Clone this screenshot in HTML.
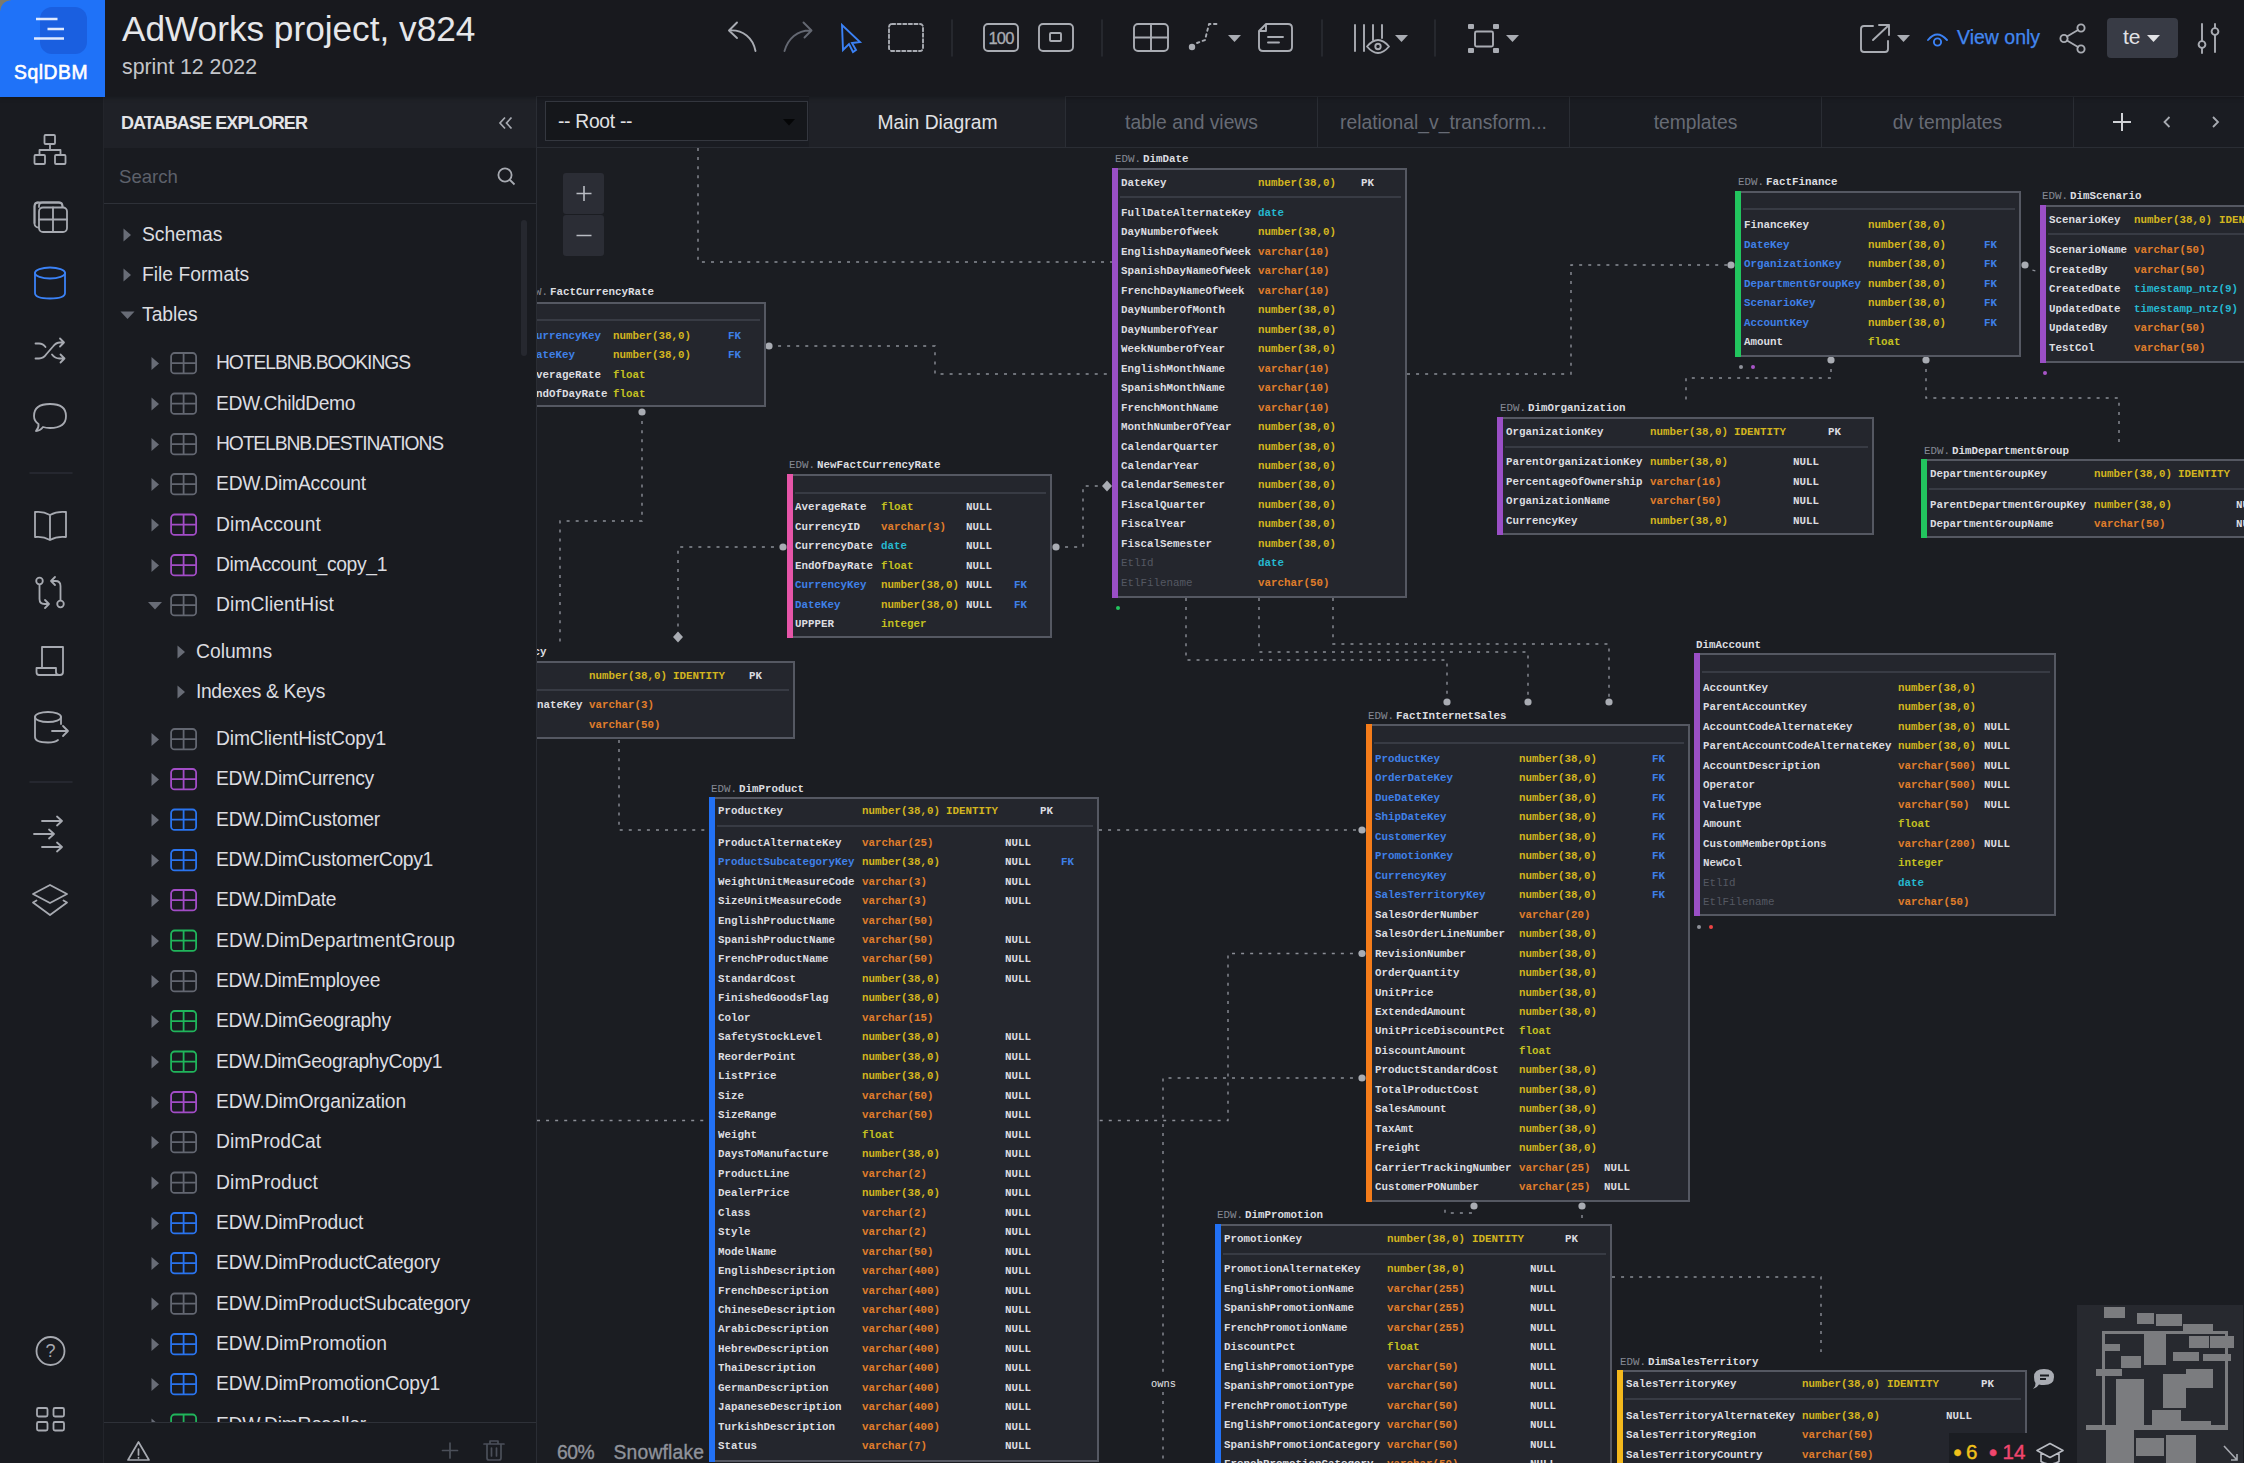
<!DOCTYPE html>
<html><head><meta charset="utf-8"><title>SqlDBM</title>
<style>
*{box-sizing:border-box;margin:0;padding:0}
html,body{width:2244px;height:1463px;overflow:hidden;background:#1a1c21;font-family:"Liberation Sans",sans-serif;color:#e1e2e5}
#top{position:absolute;left:0;top:0;width:2244px;height:96px;background:#18191e;box-shadow:0 1px 5px rgba(0,0,0,.35);z-index:2}
#logo{position:absolute;left:0;top:0;width:104.5px;height:96.5px;z-index:3;background:#1f72f8;border-radius:0 0 0 0}
#logo .nm{position:absolute;left:0;width:102px;top:62.3px;text-align:center;font-weight:400;font-size:19.3px;color:#fff;letter-spacing:.55px;-webkit-text-stroke:.6px #fff}
#ttl{position:absolute;left:122px;top:9px;font-size:35.2px;color:#e6e7ea;white-space:nowrap;line-height:40px}
#sub{position:absolute;left:122px;top:54px;font-size:21.3px;color:#c3c5ca;white-space:nowrap;line-height:26px}
#rail{position:absolute;left:0;top:96px;width:104px;height:1367px;background:#191b20;border-right:1px solid #23252b}
#exp{position:absolute;left:104px;top:96px;width:433px;height:1367px;background:#191b20;border-right:1px solid #2a2d34;overflow:hidden}
#exph{position:absolute;left:0;top:0;width:432px;height:52px;background:#1f2127}
#exph .t{position:absolute;left:17px;top:16px;font-weight:700;font-size:18px;letter-spacing:-.9px;color:#e3e4e7;line-height:22px;white-space:nowrap}
#srch{position:absolute;left:0;top:52px;width:432px;height:56px;border-bottom:1px solid #2e3138}
#srch .p{position:absolute;left:15px;top:17.5px;font-size:18.6px;color:#5d616b;line-height:22px}
#tree{position:absolute;left:0;top:52px;width:432px;height:1278px;overflow:hidden}
.tsvg{position:absolute;left:0;top:0}
.lab{position:absolute;font-size:19.3px;line-height:26px;color:#dcdde0;white-space:nowrap}
#expf{position:absolute;left:0;top:1325.5px;width:432px;height:42px;background:#191b20;border-top:1px solid #2e3138}
#scr{position:absolute;left:417px;top:124px;width:6px;height:136px;background:#26282f;border-radius:3px}
#tabs{position:absolute;left:537px;top:96px;width:1707px;height:52px;background:#1a1c22;border-bottom:1px solid #2a2d34;border-top:1px solid #2a2c34}
#root{position:absolute;left:8px;top:4px;width:263px;height:40px;background:#15171b;border:1px solid #34373f}
#root .t{position:absolute;left:12px;top:8px;letter-spacing:-.3px;font-size:19.3px;color:#e1e2e5;line-height:24px;white-space:nowrap}
.tab{position:absolute;top:-1px;height:51px;width:252px;border-left:1px solid #2a2d34;text-align:center;font-size:19.3px;line-height:53px;color:#676b75;white-space:nowrap}
.tab.a{background:#1f2127;color:#e1e2e5;border-left:none}
#cv{position:absolute;left:537px;top:148px;width:1707px;height:1315px;background:#1b1d22;overflow:hidden}
#cv i{position:absolute;font-style:normal;font-family:"Liberation Mono",monospace;font-size:10.83px;font-weight:700;line-height:14px;white-space:pre}
.tb{position:absolute;background:#24262d;border:2px solid #555862}
.tb .bar{position:absolute;left:-2px;top:-2px;bottom:-2px;width:6px}
.tb .sep{position:absolute;left:6px;right:4px;height:2px;background:#383b44}
.conn{position:absolute;left:0;top:0}
#zoom{position:absolute;left:26px;top:25px;width:41px;height:83px}
#zoom b{position:absolute;left:0;width:41px;height:41px;background:#2b2d35;border-radius:3px}
#stat{position:absolute;left:20px;top:1292.6px;font-size:19.3px;color:#90939b;line-height:24px;white-space:pre;-webkit-text-stroke:.35px #90939b}
#cnt{position:absolute;left:1412px;top:1285px;width:80px;height:30px;background:#1b1d22}
#mini{position:absolute;left:1540px;top:1157px;width:166px;height:158px;background:#27292f;overflow:hidden}
#mini b{position:absolute;background:#7b7c7f}
svg.ic{position:absolute;overflow:visible}
</style></head><body>
<div id="top">
 <div id="logo">
  <svg class="ic" style="left:0;top:0" width="104" height="96">
   <rect x="40" y="7" width="47" height="47" rx="12" fill="#1a5fe0"/>
   <g stroke="#dfeaff" stroke-width="2.5" stroke-linecap="butt"><path d="M36,19H57.500M47.500,29H64M34,38.500H64"/></g>
  </svg>
  <div class="nm">SqlDBM</div><div style="position:absolute;left:0;top:0;width:11px;height:11px;background:radial-gradient(circle at 11px 11px,rgba(0,0,0,0) 10.3px,#7a7a6e 11px)"></div>
 </div>
 <div id="ttl">AdWorks project, v824</div>
 <div id="sub">sprint 12 2022</div>
 <svg class="ic" style="left:0;top:0" width="2244" height="96" fill="none" stroke="#a9acb3" stroke-width="1.9" stroke-linecap="round" stroke-linejoin="round">
  <!-- undo -->
  <path d="M737,22.500 L729,30.500 L737,38 M729.500,30.500 C743,29.500 753,38 755.500,51"/>
  <!-- redo -->
  <g stroke="#646872"><path d="M803.500,22.500 L811.500,30.500 L804.500,37.500 M811,30.500 C797,30 788,39 784.500,51"/></g>
  <!-- cursor -->
  <path d="M842,25 L843,50 L849,44 L853,52 L856,50 L852,43 L860,42 Z" stroke="#3b82f6" stroke-linejoin="miter"/>
  <!-- dashed rect -->
  <rect x="889" y="24" width="34" height="27" rx="3" stroke-dasharray="3.2 2.4"/>
  <path d="M952,20V56" stroke="#2b2e35" stroke-width="1.5"/>
  <!-- 100 -->
  <rect x="984" y="24" width="34" height="27" rx="4"/>
  <!-- fit box -->
  <rect x="1039" y="24" width="34" height="27" rx="4"/><rect x="1050" y="33" width="11" height="8" rx="1"/>
  <path d="M1102,20V56" stroke="#2b2e35" stroke-width="1.5"/>
  <!-- table -->
  <rect x="1134" y="24" width="34" height="27" rx="4"/><path d="M1151,24V51M1134,37.5H1168"/>
  <!-- relation -->
  <path d="M1197,43 L1205,40 L1209,24 L1217,24" stroke-dasharray="2.5 3.5"/><circle cx="1192" cy="47" r="3.2" fill="#a9acb3" stroke="none"/>
  <path d="M1228,35H1241L1234.5,42Z" fill="#a9acb3" stroke="none"/>
  <!-- note -->
  <path d="M1266,24H1288Q1292,24 1292,28V47Q1292,51 1288,51H1263Q1259,51 1259,47V31Z M1259,31H1266V24"/><path d="M1268,37H1283M1268,42.500H1279"/>
  <path d="M1322,20V56" stroke="#2b2e35" stroke-width="1.5"/>
  <!-- columns + eye -->
  <path d="M1355,25V51M1364,25V51M1373,25V40M1382,25V38"/>
  <path d="M1367,46.500 Q1378,33.500 1389,46.500 Q1378,59.500 1367,46.500Z" fill="#18191e"/><circle cx="1378" cy="46.500" r="2.700"/>
  <path d="M1395,35H1408L1401.5,42Z" fill="#a9acb3" stroke="none"/>
  <path d="M1435,20V56" stroke="#2b2e35" stroke-width="1.5"/>
  <!-- fit icon -->
  <rect x="1475" y="31.500" width="18" height="15" rx="1.500"/>
  <g fill="#a9acb3" stroke="none"><rect x="1468" y="24" width="6" height="5" rx="1"/><rect x="1493" y="24" width="6" height="5" rx="1"/><rect x="1468" y="48" width="6" height="5" rx="1"/><rect x="1493" y="48" width="6" height="5" rx="1"/>
  <path d="M1506,35H1519L1512.5,42Z"/></g>
  <!-- export -->
  <path d="M1873,26H1864Q1861,26 1861,29V49Q1861,52 1864,52H1885Q1888,52 1888,49V41"/><path d="M1873,40 L1889,25 M1879,25H1889V35"/>
  <path d="M1897,35H1910L1903.5,42Z" fill="#a9acb3" stroke="none"/>
  <!-- eye (view only) -->
  <g stroke="#3b82f6"><path d="M1928,40 Q1937,29 1947,40"/><circle cx="1937.5" cy="42" r="3.6"/></g>
  <!-- share -->
  <circle cx="2081" cy="28" r="3.6"/><circle cx="2064" cy="38.5" r="3.6"/><circle cx="2081" cy="49" r="3.6"/><path d="M2067,36.5L2078,30M2067,40.5L2078,47"/>
  <!-- sliders -->
  <path d="M2202,24V41M2202,48V53M2215,24V28M2215,35V52"/><circle cx="2202" cy="44.5" r="3.4"/><circle cx="2215" cy="31.5" r="3.4"/>
 </svg>
 <div style="position:absolute;left:986px;top:27px;width:30px;text-align:center;font-size:16.5px;line-height:22px;color:#a9acb3;letter-spacing:-.9px;-webkit-text-stroke:.3px #a9acb3">100</div>
 <div style="position:absolute;left:1957px;top:25px;font-size:19.5px;line-height:24px;color:#4287f0;white-space:nowrap;-webkit-text-stroke:.25px #4287f0">View only</div>
 <div style="position:absolute;left:2107px;top:18px;width:70.500px;height:39.500px;background:#383b45;border-radius:4px"></div>
 <div style="position:absolute;left:2123px;top:24px;font-size:21px;line-height:26px;color:#e1e2e5">te</div>
 <svg class="ic" style="left:2147px;top:35px" width="14" height="8"><path d="M0,0H13L6.5,7Z" fill="#e1e2e5"/></svg>
</div>

<div id="rail">
 <svg class="ic" style="left:0;top:0" width="104" height="1367" viewBox="0 96 104 1367" fill="none" stroke="#a7aab1" stroke-width="1.8" stroke-linecap="round" stroke-linejoin="round">
  <!-- hierarchy -->
  <rect x="44.5" y="135" width="10.5" height="9" rx="1"/><path d="M50,144V150M39.5,155V150H60.5V155"/><rect x="34.5" y="155" width="10.5" height="9" rx="1"/><rect x="55" y="155" width="10.5" height="9" rx="1"/>
  <!-- tables -->
  <path d="M39,207V206Q39,202.5 42.5,202.5H59Q62.5,202.5 62.5,206V207M34.5,223V206Q34.5,202.5 38,202.5" />
  <rect x="34.5" y="202.5" width="28" height="25" rx="4"/>
  <rect x="39" y="207.5" width="28" height="24.5" rx="4" fill="#191b20"/><path d="M53,207.5V232M39,219.5H67"/>
  <!-- database (active) -->
  <g stroke="#3b82f6"><ellipse cx="50" cy="273" rx="15" ry="5.5"/><path d="M35,273V293Q35,298.5 50,298.5Q65,298.5 65,293V273"/></g>
  <!-- shuffle -->
  <path d="M35.500,358.500H39Q43.500,358.500 46.500,354L53,346.500Q56,342.500 60,342.500H64M60,338.500L64,342.500L60,346.500"/><path d="M35.500,343.500H39Q43,343.500 45.500,347M52,354.500Q55,358.500 59.500,358.500H64.500M60.500,354.500L64.500,358.500L60.500,362.500"/>
  <!-- comment -->
  <path d="M50,404Q66,404 66,416Q66,428 50,428Q46,428 43,427Q40,431 36,431Q39,428 38.5,424Q34,421 34,416Q34,404 50,404Z"/>
  <path d="M30,473H72" stroke="#2a2d34" stroke-width="1.5"/>
  <!-- book -->
  <path d="M50,515Q43,511 35,512V537Q43,536 50,540Q57,536 66,537V512Q57,511 50,515ZM50,515V540"/>
  <!-- git compare -->
  <circle cx="39.5" cy="581" r="3.3"/><circle cx="60.5" cy="604" r="3.3"/><path d="M39.5,585V599Q39.5,604 44.5,604H49M45,600L49,604L45,608"/><path d="M60.5,600V586Q60.5,581 55.5,581H51M55,577L51,581L55,585"/>
  <!-- script -->
  <path d="M42,668V647H63V672Q63,675 60,675H39Q36.5,675 36.5,672V668H56V672Q56,675 59,675"/>
  <!-- db export -->
  <ellipse cx="48" cy="717" rx="13" ry="5"/><path d="M35,717V737Q35,742.5 48,742.5Q55,742.5 58,740M61,717V724"/><path d="M52,731H68M63,726L68,731L63,736"/>
  <path d="M30,782H72" stroke="#2a2d34" stroke-width="1.5"/>
  <!-- arrows -->
  <path d="M42,821H62M57,816.5L62,821L57,825.5"/><path d="M34,834H54M49,829.5L54,834L49,838.5"/><path d="M42,847H62M57,842.5L62,847L57,851.5"/>
  <!-- layers -->
  <path d="M50,885L67,894L50,903L33,894Z"/><path d="M36.500,900.500L33,902.500L50,915L67,902.500L63.500,900.500"/>
  <!-- help -->
  <circle cx="50.5" cy="1351" r="14"/>
  <!-- grid -->
  <rect x="37" y="1408" width="10.500" height="8.500" rx="1.500"/><rect x="53.500" y="1408" width="10.500" height="8.500" rx="1.500"/><rect x="37" y="1422" width="10.500" height="8.500" rx="1.500"/><rect x="53.500" y="1422" width="10.500" height="8.500" rx="1.500"/>
 </svg>
 <div style="position:absolute;left:40px;top:1243px;width:21px;text-align:center;font-size:18px;line-height:24px;color:#a7aab1">?</div>
</div>

<div id="exp">
 <div id="exph"><div class="t">DATABASE EXPLORER</div>
  <svg class="ic" style="left:394px;top:20px" width="16" height="14" fill="none" stroke="#a7aab1" stroke-width="1.7"><path d="M7,1.5L2,7L7,12.5M13.5,1.5L8.5,7L13.5,12.5"/></svg>
 </div>
 <div id="srch"><div class="p">Search</div>
  <svg class="ic" style="left:392px;top:18px" width="22" height="22" fill="none" stroke="#a7aab1" stroke-width="1.8"><circle cx="9" cy="9" r="6.6"/><path d="M14,14L18.5,18.5"/></svg>
 </div>
 <div id="tree"><svg class="tsvg" width="432" height="1278" viewBox="104 148 432 1278"><path d="M123.5,228.5 L131,235 L123.5,241.5Z" fill="#686c76"/><path d="M123.5,268.5 L131,275 L123.5,281.5Z" fill="#686c76"/><path d="M120.5,311.5 L134.5,311.5 L127.5,319Z" fill="#686c76"/><path d="M151.5,357.1 L159,363.6 L151.5,370.1Z" fill="#686c76"/><g fill="none" stroke="#636771" stroke-width="1.8"><rect x="171.1" y="353.0" width="25" height="20.4" rx="3.5"/><path d="M183.6,353.0V373.4M171.1,363.2H196.1"/></g><path d="M151.5,397.6 L159,404.1 L151.5,410.6Z" fill="#686c76"/><g fill="none" stroke="#636771" stroke-width="1.8"><rect x="171.1" y="393.5" width="25" height="20.4" rx="3.5"/><path d="M183.6,393.5V413.9M171.1,403.7H196.1"/></g><path d="M151.5,438.1 L159,444.6 L151.5,451.1Z" fill="#686c76"/><g fill="none" stroke="#636771" stroke-width="1.8"><rect x="171.1" y="434.0" width="25" height="20.4" rx="3.5"/><path d="M183.6,434.0V454.4M171.1,444.2H196.1"/></g><path d="M151.5,478.1 L159,484.6 L151.5,491.1Z" fill="#686c76"/><g fill="none" stroke="#636771" stroke-width="1.8"><rect x="171.1" y="474.0" width="25" height="20.4" rx="3.5"/><path d="M183.6,474.0V494.4M171.1,484.2H196.1"/></g><path d="M151.5,518.6 L159,525.1 L151.5,531.6Z" fill="#686c76"/><g fill="none" stroke="#a24dc6" stroke-width="1.8"><rect x="171.1" y="514.5" width="25" height="20.4" rx="3.5"/><path d="M183.6,514.5V534.9000000000001M171.1,524.7H196.1"/></g><path d="M151.5,559.1 L159,565.6 L151.5,572.1Z" fill="#686c76"/><g fill="none" stroke="#a24dc6" stroke-width="1.8"><rect x="171.1" y="555.0" width="25" height="20.4" rx="3.5"/><path d="M183.6,555.0V575.4000000000001M171.1,565.2H196.1"/></g><path d="M148,602.1 L162,602.1 L155,609.6Z" fill="#686c76"/><g fill="none" stroke="#636771" stroke-width="1.8"><rect x="171.1" y="595.0" width="25" height="20.4" rx="3.5"/><path d="M183.6,595.0V615.4000000000001M171.1,605.2H196.1"/></g><path d="M151.5,733.1 L159,739.6 L151.5,746.1Z" fill="#686c76"/><g fill="none" stroke="#636771" stroke-width="1.8"><rect x="171.1" y="729.0" width="25" height="20.4" rx="3.5"/><path d="M183.6,729.0V749.4000000000001M171.1,739.2H196.1"/></g><path d="M151.5,773.1 L159,779.6 L151.5,786.1Z" fill="#686c76"/><g fill="none" stroke="#a24dc6" stroke-width="1.8"><rect x="171.1" y="769.0" width="25" height="20.4" rx="3.5"/><path d="M183.6,769.0V789.4000000000001M171.1,779.2H196.1"/></g><path d="M151.5,813.6 L159,820.1 L151.5,826.6Z" fill="#686c76"/><g fill="none" stroke="#2a74ee" stroke-width="1.8"><rect x="171.1" y="809.5" width="25" height="20.4" rx="3.5"/><path d="M183.6,809.5V829.9000000000001M171.1,819.7H196.1"/></g><path d="M151.5,854.1 L159,860.6 L151.5,867.1Z" fill="#686c76"/><g fill="none" stroke="#2a74ee" stroke-width="1.8"><rect x="171.1" y="850.0" width="25" height="20.4" rx="3.5"/><path d="M183.6,850.0V870.4000000000001M171.1,860.2H196.1"/></g><path d="M151.5,894.1 L159,900.6 L151.5,907.1Z" fill="#686c76"/><g fill="none" stroke="#a24dc6" stroke-width="1.8"><rect x="171.1" y="890.0" width="25" height="20.4" rx="3.5"/><path d="M183.6,890.0V910.4000000000001M171.1,900.2H196.1"/></g><path d="M151.5,934.6 L159,941.1 L151.5,947.6Z" fill="#686c76"/><g fill="none" stroke="#20b55b" stroke-width="1.8"><rect x="171.1" y="930.5" width="25" height="20.4" rx="3.5"/><path d="M183.6,930.5V950.9000000000001M171.1,940.7H196.1"/></g><path d="M151.5,975.1 L159,981.6 L151.5,988.1Z" fill="#686c76"/><g fill="none" stroke="#636771" stroke-width="1.8"><rect x="171.1" y="971.0" width="25" height="20.4" rx="3.5"/><path d="M183.6,971.0V991.4000000000001M171.1,981.2H196.1"/></g><path d="M151.5,1015.1 L159,1021.6 L151.5,1028.1Z" fill="#686c76"/><g fill="none" stroke="#20b55b" stroke-width="1.8"><rect x="171.1" y="1011.0" width="25" height="20.4" rx="3.5"/><path d="M183.6,1011.0V1031.4M171.1,1021.2H196.1"/></g><path d="M151.5,1055.6 L159,1062.1 L151.5,1068.6Z" fill="#686c76"/><g fill="none" stroke="#20b55b" stroke-width="1.8"><rect x="171.1" y="1051.5" width="25" height="20.4" rx="3.5"/><path d="M183.6,1051.5V1071.9M171.1,1061.7H196.1"/></g><path d="M151.5,1096.1 L159,1102.6 L151.5,1109.1Z" fill="#686c76"/><g fill="none" stroke="#a24dc6" stroke-width="1.8"><rect x="171.1" y="1092.0" width="25" height="20.4" rx="3.5"/><path d="M183.6,1092.0V1112.4M171.1,1102.2H196.1"/></g><path d="M151.5,1136.1 L159,1142.6 L151.5,1149.1Z" fill="#686c76"/><g fill="none" stroke="#636771" stroke-width="1.8"><rect x="171.1" y="1132.0" width="25" height="20.4" rx="3.5"/><path d="M183.6,1132.0V1152.4M171.1,1142.2H196.1"/></g><path d="M151.5,1176.6 L159,1183.1 L151.5,1189.6Z" fill="#686c76"/><g fill="none" stroke="#636771" stroke-width="1.8"><rect x="171.1" y="1172.5" width="25" height="20.4" rx="3.5"/><path d="M183.6,1172.5V1192.9M171.1,1182.7H196.1"/></g><path d="M151.5,1217.1 L159,1223.6 L151.5,1230.1Z" fill="#686c76"/><g fill="none" stroke="#2a74ee" stroke-width="1.8"><rect x="171.1" y="1213.0" width="25" height="20.4" rx="3.5"/><path d="M183.6,1213.0V1233.4M171.1,1223.2H196.1"/></g><path d="M151.5,1257.1 L159,1263.6 L151.5,1270.1Z" fill="#686c76"/><g fill="none" stroke="#2a74ee" stroke-width="1.8"><rect x="171.1" y="1253.0" width="25" height="20.4" rx="3.5"/><path d="M183.6,1253.0V1273.4M171.1,1263.2H196.1"/></g><path d="M151.5,1297.6 L159,1304.1 L151.5,1310.6Z" fill="#686c76"/><g fill="none" stroke="#636771" stroke-width="1.8"><rect x="171.1" y="1293.5" width="25" height="20.4" rx="3.5"/><path d="M183.6,1293.5V1313.9M171.1,1303.7H196.1"/></g><path d="M151.5,1338.1 L159,1344.6 L151.5,1351.1Z" fill="#686c76"/><g fill="none" stroke="#2a74ee" stroke-width="1.8"><rect x="171.1" y="1334.0" width="25" height="20.4" rx="3.5"/><path d="M183.6,1334.0V1354.4M171.1,1344.2H196.1"/></g><path d="M151.5,1378.1 L159,1384.6 L151.5,1391.1Z" fill="#686c76"/><g fill="none" stroke="#2a74ee" stroke-width="1.8"><rect x="171.1" y="1374.0" width="25" height="20.4" rx="3.5"/><path d="M183.6,1374.0V1394.4M171.1,1384.2H196.1"/></g><path d="M151.5,1418.6 L159,1425.1 L151.5,1431.6Z" fill="#686c76"/><g fill="none" stroke="#20b55b" stroke-width="1.8"><rect x="171.1" y="1414.5" width="25" height="20.4" rx="3.5"/><path d="M183.6,1414.5V1434.9M171.1,1424.7H196.1"/></g><path d="M177.5,645.5 L185,652 L177.5,658.5Z" fill="#686c76"/><path d="M177.5,685.5 L185,692 L177.5,698.5Z" fill="#686c76"/></svg><div class="lab" style="left:38px;top:74px">Schemas</div>
<div class="lab" style="left:38px;top:114px">File Formats</div>
<div class="lab" style="left:38px;top:154px">Tables</div>
<div class="lab" style="left:112px;top:202px;letter-spacing:-1.07px">HOTELBNB.BOOKINGS</div>
<div class="lab" style="left:112px;top:242.5px;letter-spacing:-0.44px">EDW.ChildDemo</div>
<div class="lab" style="left:112px;top:283px;letter-spacing:-1.11px">HOTELBNB.DESTINATIONS</div>
<div class="lab" style="left:112px;top:323px;letter-spacing:-0.23px">EDW.DimAccount</div>
<div class="lab" style="left:112px;top:363.5px;letter-spacing:0.10px">DimAccount</div>
<div class="lab" style="left:112px;top:404px;letter-spacing:-0.34px">DimAccount_copy_1</div>
<div class="lab" style="left:112px;top:444px;letter-spacing:0.09px">DimClientHist</div>
<div class="lab" style="left:112px;top:578px;letter-spacing:-0.14px">DimClientHistCopy1</div>
<div class="lab" style="left:112px;top:618px;letter-spacing:-0.25px">EDW.DimCurrency</div>
<div class="lab" style="left:112px;top:658.5px;letter-spacing:-0.21px">EDW.DimCustomer</div>
<div class="lab" style="left:112px;top:699px;letter-spacing:-0.29px">EDW.DimCustomerCopy1</div>
<div class="lab" style="left:112px;top:739px;letter-spacing:-0.39px">EDW.DimDate</div>
<div class="lab" style="left:112px;top:779.5px;letter-spacing:0.05px">EDW.DimDepartmentGroup</div>
<div class="lab" style="left:112px;top:820px;letter-spacing:-0.35px">EDW.DimEmployee</div>
<div class="lab" style="left:112px;top:860px;letter-spacing:-0.25px">EDW.DimGeography</div>
<div class="lab" style="left:112px;top:900.5px;letter-spacing:-0.41px">EDW.DimGeographyCopy1</div>
<div class="lab" style="left:112px;top:941px;letter-spacing:-0.15px">EDW.DimOrganization</div>
<div class="lab" style="left:112px;top:981px;letter-spacing:-0.00px">DimProdCat</div>
<div class="lab" style="left:112px;top:1021.5px;letter-spacing:0.13px">DimProduct</div>
<div class="lab" style="left:112px;top:1062px;letter-spacing:-0.21px">EDW.DimProduct</div>
<div class="lab" style="left:112px;top:1102px;letter-spacing:-0.19px">EDW.DimProductCategory</div>
<div class="lab" style="left:112px;top:1142.5px;letter-spacing:-0.17px">EDW.DimProductSubcategory</div>
<div class="lab" style="left:112px;top:1183px;letter-spacing:-0.03px">EDW.DimPromotion</div>
<div class="lab" style="left:112px;top:1223px;letter-spacing:-0.15px">EDW.DimPromotionCopy1</div>
<div class="lab" style="left:112px;top:1263.5px;letter-spacing:-0.29px">EDW.DimReseller</div>
<div class="lab" style="left:92px;top:491px;letter-spacing:-0.01px">Columns</div>
<div class="lab" style="left:92px;top:531px;letter-spacing:-0.36px">Indexes &amp; Keys</div></div>
 <div id="scr"></div>
 <div id="expf">
  <svg class="ic" style="left:0;top:2.5px" width="432" height="38" fill="none" stroke="#a7aab1" stroke-width="1.7" stroke-linejoin="round" stroke-linecap="round">
   <path d="M34.5,17L45,35H24Z"/><path d="M34.5,24V30M34.5,32.5V33"/>
   <g stroke="#4b4f59"><path d="M346,18V33M338.5,25.5H353.5"/><path d="M380,19H400M383,19V33Q383,35 385,35H395Q397,35 397,33V19M386,19V16H394V19M387.5,23V31M392.5,23V31"/></g>
  </svg>
 </div>
</div>

<div id="tabs">
 <div id="root"><div class="t">-- Root --</div>
  <svg class="ic" style="left:237px;top:17px" width="14" height="8"><path d="M0,0H12L6,6.5Z" fill="#050607"/></svg>
 </div>
 <div class="tab a" style="left:272px;width:257px">Main Diagram</div>
 <div class="tab" style="left:528px">table and views</div>
 <div class="tab" style="left:780px">relational_v_transform...</div>
 <div class="tab" style="left:1032px">templates</div>
 <div class="tab" style="left:1284px">dv templates</div>
 <div class="tab" style="left:1536px;width:171px"></div>
 <svg class="ic" style="left:1536px;top:-1px" width="171" height="52" fill="none" stroke="#a7aab1" stroke-width="1.8"><path d="M40,26H58M49,17V35" stroke="#d0d2d6" stroke-width="2"/><path d="M96.500,21L91.500,26L96.500,31M140,21L145,26L140,31"/></svg>
</div>

<div id="cv">
<svg class="conn" width="1707" height="1315" viewBox="537 148 1707 1315"><g fill="none" stroke="#8b8e96" stroke-width="1.4" stroke-dasharray="3 6.07"><polyline points="698,148 698,262 1112,262"/><polyline points="769,346 935,346 935,374 1112,374"/><polyline points="642,412 642,521 560,521 560,644"/><polyline points="783,547 678,547 678,637"/><polyline points="1056,547 1083,547 1083,486 1107,486"/><polyline points="1407,374 1571,374 1571,265 1731,265"/><polyline points="1831,360 1831,378 1686,378 1686,400"/><polyline points="1926,360 1926,398 2119,398 2119,442"/><polyline points="1186,598 1186,660 1447,660 1447,702"/><polyline points="1259,598 1259,652 1528,652 1528,702"/><polyline points="1333,598 1333,644 1609,644 1609,702"/><polyline points="1099,830 1362,830"/><polyline points="1362,953.5 1228,953.5 1228,1120.5 1099,1120.5"/><polyline points="1362,1078 1163,1078 1163,1372"/><polyline points="1163,1392 1163,1463"/><polyline points="619,740 619,830 709,830"/><polyline points="537,1120.5 709,1120.5"/><polyline points="1612,1277 1821,1277 1821,1352"/><polyline points="1582,1206 1582,1224"/><polyline points="1474,1206 1474,1213 1445,1213 1445,1206"/><polyline points="2025,265 2032,270 2040,272"/></g><g fill="#a9acb3"><circle cx="769" cy="346" r="3.6"/><circle cx="642" cy="412" r="3.6"/><circle cx="783" cy="547" r="3.6"/><circle cx="1056" cy="547" r="3.6"/><circle cx="1731" cy="265" r="3.6"/><circle cx="2025" cy="265" r="3.6"/><circle cx="1831" cy="360" r="3.6"/><circle cx="1926" cy="360" r="3.6"/><circle cx="1447" cy="702" r="3.6"/><circle cx="1528" cy="702" r="3.6"/><circle cx="1609" cy="702" r="3.6"/><circle cx="1362" cy="830" r="3.6"/><circle cx="1362" cy="953.5" r="3.6"/><circle cx="1362" cy="1078" r="3.6"/><circle cx="1474" cy="1206" r="3.6"/><circle cx="1582" cy="1206" r="3.6"/><path d="M673,637 L678,631.5 L683,637 L678,642.5Z"/><path d="M1102,486 L1107,480.5 L1112,486 L1107,491.5Z"/></g><circle cx="1741" cy="367" r="2" fill="#8f929a"/><circle cx="1753" cy="367" r="2" fill="#a855c8"/><circle cx="2045" cy="373" r="2" fill="#a855c8"/><circle cx="1118" cy="608" r="2" fill="#22c55e"/><circle cx="1699" cy="927" r="2" fill="#8f929a"/><circle cx="1711" cy="927" r="2" fill="#ef4444"/></svg>
<div class="tb" style="left:-22px;top:154px;width:251px;height:105px">
<b class="sep" style="top:14.5px"></b>
</div>
<i style="left:-15.0px;top:137px;color:#868a94;font-weight:400">EDW.</i>
<i style="left:13.0px;top:137px;color:#dcdde0">FactCurrencyRate</i>
<i style="left:-7.5px;top:181px;color:#3f80e8">CurrencyKey</i>
<i style="left:76.0px;top:181px;color:#d3b51f">number(38,0)</i>
<i style="left:191.0px;top:181px;color:#3f80e8">FK</i>
<i style="left:-7.5px;top:200px;color:#3f80e8">DateKey</i>
<i style="left:76.0px;top:200px;color:#d3b51f">number(38,0)</i>
<i style="left:191.0px;top:200px;color:#3f80e8">FK</i>
<i style="left:-7.5px;top:220px;color:#dcdde0">AverageRate</i>
<i style="left:76.0px;top:220px;color:#c3c021">float</i>
<i style="left:-7.5px;top:239px;color:#dcdde0">EndOfDayRate</i>
<i style="left:76.0px;top:239px;color:#c3c021">float</i>
<div class="tb" style="left:250px;top:326px;width:265px;height:164px">
<b class="bar" style="background:#e655a8"></b>
<b class="sep" style="top:15.5px"></b>
</div>
<i style="left:252.0px;top:310px;color:#868a94;font-weight:400">EDW.</i>
<i style="left:280.0px;top:310px;color:#dcdde0">NewFactCurrencyRate</i>
<i style="left:258.0px;top:352px;color:#dcdde0">AverageRate</i>
<i style="left:344.0px;top:352px;color:#c3c021">float</i>
<i style="left:429.0px;top:352px;color:#dcdde0">NULL</i>
<i style="left:258.0px;top:372px;color:#dcdde0">CurrencyID</i>
<i style="left:344.0px;top:372px;color:#e07e2b">varchar(3)</i>
<i style="left:429.0px;top:372px;color:#dcdde0">NULL</i>
<i style="left:258.0px;top:391px;color:#dcdde0">CurrencyDate</i>
<i style="left:344.0px;top:391px;color:#26b8d0">date</i>
<i style="left:429.0px;top:391px;color:#dcdde0">NULL</i>
<i style="left:258.0px;top:411px;color:#dcdde0">EndOfDayRate</i>
<i style="left:344.0px;top:411px;color:#c3c021">float</i>
<i style="left:429.0px;top:411px;color:#dcdde0">NULL</i>
<i style="left:258.0px;top:430px;color:#3f80e8">CurrencyKey</i>
<i style="left:344.0px;top:430px;color:#d3b51f">number(38,0)</i>
<i style="left:429.0px;top:430px;color:#dcdde0">NULL</i>
<i style="left:477.0px;top:430px;color:#3f80e8">FK</i>
<i style="left:258.0px;top:450px;color:#3f80e8">DateKey</i>
<i style="left:344.0px;top:450px;color:#d3b51f">number(38,0)</i>
<i style="left:429.0px;top:450px;color:#dcdde0">NULL</i>
<i style="left:477.0px;top:450px;color:#3f80e8">FK</i>
<i style="left:258.0px;top:469px;color:#dcdde0">UPPPER</i>
<i style="left:344.0px;top:469px;color:#c3c021">integer</i>
<div class="tb" style="left:-97px;top:513px;width:355px;height:78px">
<b class="sep" style="top:25.5px"></b>
</div>
<i style="left:-90.0px;top:497px;color:#868a94;font-weight:400">EDW.</i>
<i style="left:-62.0px;top:497px;color:#dcdde0">DimCurrency</i>
<i style="left:-84.5px;top:521px;color:#dcdde0">CurrencyKey</i>
<i style="left:52.0px;top:521px;color:#d3b51f">number(38,0)</i>
<i style="left:136.0px;top:521px;color:#d3b51f">IDENTITY</i>
<i style="left:212.0px;top:521px;color:#dcdde0">PK</i>
<i style="left:-84.5px;top:550px;color:#dcdde0">CurrencyAlternateKey</i>
<i style="left:52.0px;top:550px;color:#e07e2b">varchar(3)</i>
<i style="left:-84.5px;top:570px;color:#dcdde0">CurrencyName</i>
<i style="left:52.0px;top:570px;color:#e07e2b">varchar(50)</i>
<div class="tb" style="left:575px;top:20px;width:295px;height:430px">
<b class="bar" style="background:#9a4fc6"></b>
<b class="sep" style="top:25.5px"></b>
</div>
<i style="left:578.0px;top:4px;color:#868a94;font-weight:400">EDW.</i>
<i style="left:606.0px;top:4px;color:#dcdde0">DimDate</i>
<i style="left:584.0px;top:28px;color:#dcdde0">DateKey</i>
<i style="left:721.0px;top:28px;color:#d3b51f">number(38,0)</i>
<i style="left:824.0px;top:28px;color:#dcdde0">PK</i>
<i style="left:584.0px;top:58px;color:#dcdde0">FullDateAlternateKey</i>
<i style="left:721.0px;top:58px;color:#26b8d0">date</i>
<i style="left:584.0px;top:77px;color:#dcdde0">DayNumberOfWeek</i>
<i style="left:721.0px;top:77px;color:#d3b51f">number(38,0)</i>
<i style="left:584.0px;top:97px;color:#dcdde0">EnglishDayNameOfWeek</i>
<i style="left:721.0px;top:97px;color:#e07e2b">varchar(10)</i>
<i style="left:584.0px;top:116px;color:#dcdde0">SpanishDayNameOfWeek</i>
<i style="left:721.0px;top:116px;color:#e07e2b">varchar(10)</i>
<i style="left:584.0px;top:136px;color:#dcdde0">FrenchDayNameOfWeek</i>
<i style="left:721.0px;top:136px;color:#e07e2b">varchar(10)</i>
<i style="left:584.0px;top:155px;color:#dcdde0">DayNumberOfMonth</i>
<i style="left:721.0px;top:155px;color:#d3b51f">number(38,0)</i>
<i style="left:584.0px;top:175px;color:#dcdde0">DayNumberOfYear</i>
<i style="left:721.0px;top:175px;color:#d3b51f">number(38,0)</i>
<i style="left:584.0px;top:194px;color:#dcdde0">WeekNumberOfYear</i>
<i style="left:721.0px;top:194px;color:#d3b51f">number(38,0)</i>
<i style="left:584.0px;top:214px;color:#dcdde0">EnglishMonthName</i>
<i style="left:721.0px;top:214px;color:#e07e2b">varchar(10)</i>
<i style="left:584.0px;top:233px;color:#dcdde0">SpanishMonthName</i>
<i style="left:721.0px;top:233px;color:#e07e2b">varchar(10)</i>
<i style="left:584.0px;top:253px;color:#dcdde0">FrenchMonthName</i>
<i style="left:721.0px;top:253px;color:#e07e2b">varchar(10)</i>
<i style="left:584.0px;top:272px;color:#dcdde0">MonthNumberOfYear</i>
<i style="left:721.0px;top:272px;color:#d3b51f">number(38,0)</i>
<i style="left:584.0px;top:292px;color:#dcdde0">CalendarQuarter</i>
<i style="left:721.0px;top:292px;color:#d3b51f">number(38,0)</i>
<i style="left:584.0px;top:311px;color:#dcdde0">CalendarYear</i>
<i style="left:721.0px;top:311px;color:#d3b51f">number(38,0)</i>
<i style="left:584.0px;top:330px;color:#dcdde0">CalendarSemester</i>
<i style="left:721.0px;top:330px;color:#d3b51f">number(38,0)</i>
<i style="left:584.0px;top:350px;color:#dcdde0">FiscalQuarter</i>
<i style="left:721.0px;top:350px;color:#d3b51f">number(38,0)</i>
<i style="left:584.0px;top:369px;color:#dcdde0">FiscalYear</i>
<i style="left:721.0px;top:369px;color:#d3b51f">number(38,0)</i>
<i style="left:584.0px;top:389px;color:#dcdde0">FiscalSemester</i>
<i style="left:721.0px;top:389px;color:#d3b51f">number(38,0)</i>
<i style="left:584.0px;top:408px;color:#545862;font-weight:400">EtlId</i>
<i style="left:721.0px;top:408px;color:#26b8d0">date</i>
<i style="left:584.0px;top:428px;color:#545862;font-weight:400">EtlFilename</i>
<i style="left:721.0px;top:428px;color:#e07e2b">varchar(50)</i>
<div class="tb" style="left:1198px;top:43px;width:286px;height:166px">
<b class="bar" style="background:#22c55e"></b>
<b class="sep" style="top:14.5px"></b>
</div>
<i style="left:1201.0px;top:27px;color:#868a94;font-weight:400">EDW.</i>
<i style="left:1229.0px;top:27px;color:#dcdde0">FactFinance</i>
<i style="left:1207.0px;top:70px;color:#dcdde0">FinanceKey</i>
<i style="left:1331.0px;top:70px;color:#d3b51f">number(38,0)</i>
<i style="left:1207.0px;top:90px;color:#3f80e8">DateKey</i>
<i style="left:1331.0px;top:90px;color:#d3b51f">number(38,0)</i>
<i style="left:1447.0px;top:90px;color:#3f80e8">FK</i>
<i style="left:1207.0px;top:109px;color:#3f80e8">OrganizationKey</i>
<i style="left:1331.0px;top:109px;color:#d3b51f">number(38,0)</i>
<i style="left:1447.0px;top:109px;color:#3f80e8">FK</i>
<i style="left:1207.0px;top:129px;color:#3f80e8">DepartmentGroupKey</i>
<i style="left:1331.0px;top:129px;color:#d3b51f">number(38,0)</i>
<i style="left:1447.0px;top:129px;color:#3f80e8">FK</i>
<i style="left:1207.0px;top:148px;color:#3f80e8">ScenarioKey</i>
<i style="left:1331.0px;top:148px;color:#d3b51f">number(38,0)</i>
<i style="left:1447.0px;top:148px;color:#3f80e8">FK</i>
<i style="left:1207.0px;top:168px;color:#3f80e8">AccountKey</i>
<i style="left:1331.0px;top:168px;color:#d3b51f">number(38,0)</i>
<i style="left:1447.0px;top:168px;color:#3f80e8">FK</i>
<i style="left:1207.0px;top:187px;color:#dcdde0">Amount</i>
<i style="left:1331.0px;top:187px;color:#c3c021">float</i>
<div class="tb" style="left:1503px;top:57px;width:260px;height:158px">
<b class="bar" style="background:#9a4fc6"></b>
<b class="sep" style="top:25.5px"></b>
</div>
<i style="left:1505.0px;top:41px;color:#868a94;font-weight:400">EDW.</i>
<i style="left:1533.0px;top:41px;color:#dcdde0">DimScenario</i>
<i style="left:1512.0px;top:65px;color:#dcdde0">ScenarioKey</i>
<i style="left:1597.0px;top:65px;color:#d3b51f">number(38,0)</i>
<i style="left:1682.0px;top:65px;color:#d3b51f">IDENTITY</i>
<i style="left:1753.0px;top:65px;color:#dcdde0">PK</i>
<i style="left:1512.0px;top:95px;color:#dcdde0">ScenarioName</i>
<i style="left:1597.0px;top:95px;color:#e07e2b">varchar(50)</i>
<i style="left:1512.0px;top:115px;color:#dcdde0">CreatedBy</i>
<i style="left:1597.0px;top:115px;color:#e07e2b">varchar(50)</i>
<i style="left:1512.0px;top:134px;color:#dcdde0">CreatedDate</i>
<i style="left:1597.0px;top:134px;color:#26b8d0">timestamp_ntz(9)</i>
<i style="left:1512.0px;top:154px;color:#dcdde0">UpdatedDate</i>
<i style="left:1597.0px;top:154px;color:#26b8d0">timestamp_ntz(9)</i>
<i style="left:1512.0px;top:173px;color:#dcdde0">UpdatedBy</i>
<i style="left:1597.0px;top:173px;color:#e07e2b">varchar(50)</i>
<i style="left:1512.0px;top:193px;color:#dcdde0">TestCol</i>
<i style="left:1597.0px;top:193px;color:#e07e2b">varchar(50)</i>
<div class="tb" style="left:960px;top:269px;width:377px;height:118px">
<b class="bar" style="background:#9a4fc6"></b>
<b class="sep" style="top:26.5px"></b>
</div>
<i style="left:963.0px;top:253px;color:#868a94;font-weight:400">EDW.</i>
<i style="left:991.0px;top:253px;color:#dcdde0">DimOrganization</i>
<i style="left:969.0px;top:277px;color:#dcdde0">OrganizationKey</i>
<i style="left:1113.0px;top:277px;color:#d3b51f">number(38,0)</i>
<i style="left:1197.0px;top:277px;color:#d3b51f">IDENTITY</i>
<i style="left:1291.0px;top:277px;color:#dcdde0">PK</i>
<i style="left:969.0px;top:307px;color:#dcdde0">ParentOrganizationKey</i>
<i style="left:1113.0px;top:307px;color:#d3b51f">number(38,0)</i>
<i style="left:1256.0px;top:307px;color:#dcdde0">NULL</i>
<i style="left:969.0px;top:327px;color:#dcdde0">PercentageOfOwnership</i>
<i style="left:1113.0px;top:327px;color:#e07e2b">varchar(16)</i>
<i style="left:1256.0px;top:327px;color:#dcdde0">NULL</i>
<i style="left:969.0px;top:346px;color:#dcdde0">OrganizationName</i>
<i style="left:1113.0px;top:346px;color:#e07e2b">varchar(50)</i>
<i style="left:1256.0px;top:346px;color:#dcdde0">NULL</i>
<i style="left:969.0px;top:366px;color:#dcdde0">CurrencyKey</i>
<i style="left:1113.0px;top:366px;color:#d3b51f">number(38,0)</i>
<i style="left:1256.0px;top:366px;color:#dcdde0">NULL</i>
<div class="tb" style="left:1384px;top:311px;width:380px;height:79px">
<b class="bar" style="background:#22c55e"></b>
<b class="sep" style="top:26.5px"></b>
</div>
<i style="left:1387.0px;top:296px;color:#868a94;font-weight:400">EDW.</i>
<i style="left:1415.0px;top:296px;color:#dcdde0">DimDepartmentGroup</i>
<i style="left:1393.0px;top:319px;color:#dcdde0">DepartmentGroupKey</i>
<i style="left:1557.0px;top:319px;color:#d3b51f">number(38,0)</i>
<i style="left:1641.0px;top:319px;color:#d3b51f">IDENTITY</i>
<i style="left:1753.0px;top:319px;color:#dcdde0">PK</i>
<i style="left:1393.0px;top:350px;color:#dcdde0">ParentDepartmentGroupKey</i>
<i style="left:1557.0px;top:350px;color:#d3b51f">number(38,0)</i>
<i style="left:1699.0px;top:350px;color:#dcdde0">NULL</i>
<i style="left:1393.0px;top:369px;color:#dcdde0">DepartmentGroupName</i>
<i style="left:1557.0px;top:369px;color:#e07e2b">varchar(50)</i>
<i style="left:1699.0px;top:369px;color:#dcdde0">NULL</i>
<div class="tb" style="left:1157px;top:505px;width:362px;height:263px">
<b class="bar" style="background:#9a4fc6"></b>
<b class="sep" style="top:15.5px"></b>
</div>
<i style="left:1159.0px;top:490px;color:#dcdde0">DimAccount</i>
<i style="left:1166.0px;top:533px;color:#dcdde0">AccountKey</i>
<i style="left:1361.0px;top:533px;color:#d3b51f">number(38,0)</i>
<i style="left:1166.0px;top:552px;color:#dcdde0">ParentAccountKey</i>
<i style="left:1361.0px;top:552px;color:#d3b51f">number(38,0)</i>
<i style="left:1166.0px;top:572px;color:#dcdde0">AccountCodeAlternateKey</i>
<i style="left:1361.0px;top:572px;color:#d3b51f">number(38,0)</i>
<i style="left:1447.0px;top:572px;color:#dcdde0">NULL</i>
<i style="left:1166.0px;top:591px;color:#dcdde0">ParentAccountCodeAlternateKey</i>
<i style="left:1361.0px;top:591px;color:#d3b51f">number(38,0)</i>
<i style="left:1447.0px;top:591px;color:#dcdde0">NULL</i>
<i style="left:1166.0px;top:611px;color:#dcdde0">AccountDescription</i>
<i style="left:1361.0px;top:611px;color:#e07e2b">varchar(500)</i>
<i style="left:1447.0px;top:611px;color:#dcdde0">NULL</i>
<i style="left:1166.0px;top:630px;color:#dcdde0">Operator</i>
<i style="left:1361.0px;top:630px;color:#e07e2b">varchar(500)</i>
<i style="left:1447.0px;top:630px;color:#dcdde0">NULL</i>
<i style="left:1166.0px;top:650px;color:#dcdde0">ValueType</i>
<i style="left:1361.0px;top:650px;color:#e07e2b">varchar(50)</i>
<i style="left:1447.0px;top:650px;color:#dcdde0">NULL</i>
<i style="left:1166.0px;top:669px;color:#dcdde0">Amount</i>
<i style="left:1361.0px;top:669px;color:#c3c021">float</i>
<i style="left:1166.0px;top:689px;color:#dcdde0">CustomMemberOptions</i>
<i style="left:1361.0px;top:689px;color:#e07e2b">varchar(200)</i>
<i style="left:1447.0px;top:689px;color:#dcdde0">NULL</i>
<i style="left:1166.0px;top:708px;color:#dcdde0">NewCol</i>
<i style="left:1361.0px;top:708px;color:#c3c021">integer</i>
<i style="left:1166.0px;top:728px;color:#545862;font-weight:400">EtlId</i>
<i style="left:1361.0px;top:728px;color:#26b8d0">date</i>
<i style="left:1166.0px;top:747px;color:#545862;font-weight:400">EtlFilename</i>
<i style="left:1361.0px;top:747px;color:#e07e2b">varchar(50)</i>
<div class="tb" style="left:829px;top:576px;width:324px;height:478px">
<b class="bar" style="background:#f57c1a"></b>
<b class="sep" style="top:15.5px"></b>
</div>
<i style="left:831.0px;top:561px;color:#868a94;font-weight:400">EDW.</i>
<i style="left:859.0px;top:561px;color:#dcdde0">FactInternetSales</i>
<i style="left:838.0px;top:604px;color:#3f80e8">ProductKey</i>
<i style="left:982.0px;top:604px;color:#d3b51f">number(38,0)</i>
<i style="left:1115.0px;top:604px;color:#3f80e8">FK</i>
<i style="left:838.0px;top:623px;color:#3f80e8">OrderDateKey</i>
<i style="left:982.0px;top:623px;color:#d3b51f">number(38,0)</i>
<i style="left:1115.0px;top:623px;color:#3f80e8">FK</i>
<i style="left:838.0px;top:643px;color:#3f80e8">DueDateKey</i>
<i style="left:982.0px;top:643px;color:#d3b51f">number(38,0)</i>
<i style="left:1115.0px;top:643px;color:#3f80e8">FK</i>
<i style="left:838.0px;top:662px;color:#3f80e8">ShipDateKey</i>
<i style="left:982.0px;top:662px;color:#d3b51f">number(38,0)</i>
<i style="left:1115.0px;top:662px;color:#3f80e8">FK</i>
<i style="left:838.0px;top:682px;color:#3f80e8">CustomerKey</i>
<i style="left:982.0px;top:682px;color:#d3b51f">number(38,0)</i>
<i style="left:1115.0px;top:682px;color:#3f80e8">FK</i>
<i style="left:838.0px;top:701px;color:#3f80e8">PromotionKey</i>
<i style="left:982.0px;top:701px;color:#d3b51f">number(38,0)</i>
<i style="left:1115.0px;top:701px;color:#3f80e8">FK</i>
<i style="left:838.0px;top:721px;color:#3f80e8">CurrencyKey</i>
<i style="left:982.0px;top:721px;color:#d3b51f">number(38,0)</i>
<i style="left:1115.0px;top:721px;color:#3f80e8">FK</i>
<i style="left:838.0px;top:740px;color:#3f80e8">SalesTerritoryKey</i>
<i style="left:982.0px;top:740px;color:#d3b51f">number(38,0)</i>
<i style="left:1115.0px;top:740px;color:#3f80e8">FK</i>
<i style="left:838.0px;top:760px;color:#dcdde0">SalesOrderNumber</i>
<i style="left:982.0px;top:760px;color:#e07e2b">varchar(20)</i>
<i style="left:838.0px;top:779px;color:#dcdde0">SalesOrderLineNumber</i>
<i style="left:982.0px;top:779px;color:#d3b51f">number(38,0)</i>
<i style="left:838.0px;top:799px;color:#dcdde0">RevisionNumber</i>
<i style="left:982.0px;top:799px;color:#d3b51f">number(38,0)</i>
<i style="left:838.0px;top:818px;color:#dcdde0">OrderQuantity</i>
<i style="left:982.0px;top:818px;color:#d3b51f">number(38,0)</i>
<i style="left:838.0px;top:838px;color:#dcdde0">UnitPrice</i>
<i style="left:982.0px;top:838px;color:#d3b51f">number(38,0)</i>
<i style="left:838.0px;top:857px;color:#dcdde0">ExtendedAmount</i>
<i style="left:982.0px;top:857px;color:#d3b51f">number(38,0)</i>
<i style="left:838.0px;top:876px;color:#dcdde0">UnitPriceDiscountPct</i>
<i style="left:982.0px;top:876px;color:#c3c021">float</i>
<i style="left:838.0px;top:896px;color:#dcdde0">DiscountAmount</i>
<i style="left:982.0px;top:896px;color:#c3c021">float</i>
<i style="left:838.0px;top:915px;color:#dcdde0">ProductStandardCost</i>
<i style="left:982.0px;top:915px;color:#d3b51f">number(38,0)</i>
<i style="left:838.0px;top:935px;color:#dcdde0">TotalProductCost</i>
<i style="left:982.0px;top:935px;color:#d3b51f">number(38,0)</i>
<i style="left:838.0px;top:954px;color:#dcdde0">SalesAmount</i>
<i style="left:982.0px;top:954px;color:#d3b51f">number(38,0)</i>
<i style="left:838.0px;top:974px;color:#dcdde0">TaxAmt</i>
<i style="left:982.0px;top:974px;color:#d3b51f">number(38,0)</i>
<i style="left:838.0px;top:993px;color:#dcdde0">Freight</i>
<i style="left:982.0px;top:993px;color:#d3b51f">number(38,0)</i>
<i style="left:838.0px;top:1013px;color:#dcdde0">CarrierTrackingNumber</i>
<i style="left:982.0px;top:1013px;color:#e07e2b">varchar(25)</i>
<i style="left:1067.0px;top:1013px;color:#dcdde0">NULL</i>
<i style="left:838.0px;top:1032px;color:#dcdde0">CustomerPONumber</i>
<i style="left:982.0px;top:1032px;color:#e07e2b">varchar(25)</i>
<i style="left:1067.0px;top:1032px;color:#dcdde0">NULL</i>
<div class="tb" style="left:172px;top:649px;width:390px;height:665px">
<b class="bar" style="background:#2271f5"></b>
<b class="sep" style="top:25.5px"></b>
</div>
<i style="left:174.0px;top:634px;color:#868a94;font-weight:400">EDW.</i>
<i style="left:202.0px;top:634px;color:#dcdde0">DimProduct</i>
<i style="left:181.0px;top:656px;color:#dcdde0">ProductKey</i>
<i style="left:325.0px;top:656px;color:#d3b51f">number(38,0)</i>
<i style="left:409.0px;top:656px;color:#d3b51f">IDENTITY</i>
<i style="left:503.0px;top:656px;color:#dcdde0">PK</i>
<i style="left:181.0px;top:688px;color:#dcdde0">ProductAlternateKey</i>
<i style="left:325.0px;top:688px;color:#e07e2b">varchar(25)</i>
<i style="left:468.0px;top:688px;color:#dcdde0">NULL</i>
<i style="left:181.0px;top:707px;color:#3f80e8">ProductSubcategoryKey</i>
<i style="left:325.0px;top:707px;color:#d3b51f">number(38,0)</i>
<i style="left:468.0px;top:707px;color:#dcdde0">NULL</i>
<i style="left:524.0px;top:707px;color:#3f80e8">FK</i>
<i style="left:181.0px;top:727px;color:#dcdde0">WeightUnitMeasureCode</i>
<i style="left:325.0px;top:727px;color:#e07e2b">varchar(3)</i>
<i style="left:468.0px;top:727px;color:#dcdde0">NULL</i>
<i style="left:181.0px;top:746px;color:#dcdde0">SizeUnitMeasureCode</i>
<i style="left:325.0px;top:746px;color:#e07e2b">varchar(3)</i>
<i style="left:468.0px;top:746px;color:#dcdde0">NULL</i>
<i style="left:181.0px;top:766px;color:#dcdde0">EnglishProductName</i>
<i style="left:325.0px;top:766px;color:#e07e2b">varchar(50)</i>
<i style="left:181.0px;top:785px;color:#dcdde0">SpanishProductName</i>
<i style="left:325.0px;top:785px;color:#e07e2b">varchar(50)</i>
<i style="left:468.0px;top:785px;color:#dcdde0">NULL</i>
<i style="left:181.0px;top:804px;color:#dcdde0">FrenchProductName</i>
<i style="left:325.0px;top:804px;color:#e07e2b">varchar(50)</i>
<i style="left:468.0px;top:804px;color:#dcdde0">NULL</i>
<i style="left:181.0px;top:824px;color:#dcdde0">StandardCost</i>
<i style="left:325.0px;top:824px;color:#d3b51f">number(38,0)</i>
<i style="left:468.0px;top:824px;color:#dcdde0">NULL</i>
<i style="left:181.0px;top:843px;color:#dcdde0">FinishedGoodsFlag</i>
<i style="left:325.0px;top:843px;color:#d3b51f">number(38,0)</i>
<i style="left:181.0px;top:863px;color:#dcdde0">Color</i>
<i style="left:325.0px;top:863px;color:#e07e2b">varchar(15)</i>
<i style="left:181.0px;top:882px;color:#dcdde0">SafetyStockLevel</i>
<i style="left:325.0px;top:882px;color:#d3b51f">number(38,0)</i>
<i style="left:468.0px;top:882px;color:#dcdde0">NULL</i>
<i style="left:181.0px;top:902px;color:#dcdde0">ReorderPoint</i>
<i style="left:325.0px;top:902px;color:#d3b51f">number(38,0)</i>
<i style="left:468.0px;top:902px;color:#dcdde0">NULL</i>
<i style="left:181.0px;top:921px;color:#dcdde0">ListPrice</i>
<i style="left:325.0px;top:921px;color:#d3b51f">number(38,0)</i>
<i style="left:468.0px;top:921px;color:#dcdde0">NULL</i>
<i style="left:181.0px;top:941px;color:#dcdde0">Size</i>
<i style="left:325.0px;top:941px;color:#e07e2b">varchar(50)</i>
<i style="left:468.0px;top:941px;color:#dcdde0">NULL</i>
<i style="left:181.0px;top:960px;color:#dcdde0">SizeRange</i>
<i style="left:325.0px;top:960px;color:#e07e2b">varchar(50)</i>
<i style="left:468.0px;top:960px;color:#dcdde0">NULL</i>
<i style="left:181.0px;top:980px;color:#dcdde0">Weight</i>
<i style="left:325.0px;top:980px;color:#c3c021">float</i>
<i style="left:468.0px;top:980px;color:#dcdde0">NULL</i>
<i style="left:181.0px;top:999px;color:#dcdde0">DaysToManufacture</i>
<i style="left:325.0px;top:999px;color:#d3b51f">number(38,0)</i>
<i style="left:468.0px;top:999px;color:#dcdde0">NULL</i>
<i style="left:181.0px;top:1019px;color:#dcdde0">ProductLine</i>
<i style="left:325.0px;top:1019px;color:#e07e2b">varchar(2)</i>
<i style="left:468.0px;top:1019px;color:#dcdde0">NULL</i>
<i style="left:181.0px;top:1038px;color:#dcdde0">DealerPrice</i>
<i style="left:325.0px;top:1038px;color:#d3b51f">number(38,0)</i>
<i style="left:468.0px;top:1038px;color:#dcdde0">NULL</i>
<i style="left:181.0px;top:1058px;color:#dcdde0">Class</i>
<i style="left:325.0px;top:1058px;color:#e07e2b">varchar(2)</i>
<i style="left:468.0px;top:1058px;color:#dcdde0">NULL</i>
<i style="left:181.0px;top:1077px;color:#dcdde0">Style</i>
<i style="left:325.0px;top:1077px;color:#e07e2b">varchar(2)</i>
<i style="left:468.0px;top:1077px;color:#dcdde0">NULL</i>
<i style="left:181.0px;top:1097px;color:#dcdde0">ModelName</i>
<i style="left:325.0px;top:1097px;color:#e07e2b">varchar(50)</i>
<i style="left:468.0px;top:1097px;color:#dcdde0">NULL</i>
<i style="left:181.0px;top:1116px;color:#dcdde0">EnglishDescription</i>
<i style="left:325.0px;top:1116px;color:#e07e2b">varchar(400)</i>
<i style="left:468.0px;top:1116px;color:#dcdde0">NULL</i>
<i style="left:181.0px;top:1136px;color:#dcdde0">FrenchDescription</i>
<i style="left:325.0px;top:1136px;color:#e07e2b">varchar(400)</i>
<i style="left:468.0px;top:1136px;color:#dcdde0">NULL</i>
<i style="left:181.0px;top:1155px;color:#dcdde0">ChineseDescription</i>
<i style="left:325.0px;top:1155px;color:#e07e2b">varchar(400)</i>
<i style="left:468.0px;top:1155px;color:#dcdde0">NULL</i>
<i style="left:181.0px;top:1174px;color:#dcdde0">ArabicDescription</i>
<i style="left:325.0px;top:1174px;color:#e07e2b">varchar(400)</i>
<i style="left:468.0px;top:1174px;color:#dcdde0">NULL</i>
<i style="left:181.0px;top:1194px;color:#dcdde0">HebrewDescription</i>
<i style="left:325.0px;top:1194px;color:#e07e2b">varchar(400)</i>
<i style="left:468.0px;top:1194px;color:#dcdde0">NULL</i>
<i style="left:181.0px;top:1213px;color:#dcdde0">ThaiDescription</i>
<i style="left:325.0px;top:1213px;color:#e07e2b">varchar(400)</i>
<i style="left:468.0px;top:1213px;color:#dcdde0">NULL</i>
<i style="left:181.0px;top:1233px;color:#dcdde0">GermanDescription</i>
<i style="left:325.0px;top:1233px;color:#e07e2b">varchar(400)</i>
<i style="left:468.0px;top:1233px;color:#dcdde0">NULL</i>
<i style="left:181.0px;top:1252px;color:#dcdde0">JapaneseDescription</i>
<i style="left:325.0px;top:1252px;color:#e07e2b">varchar(400)</i>
<i style="left:468.0px;top:1252px;color:#dcdde0">NULL</i>
<i style="left:181.0px;top:1272px;color:#dcdde0">TurkishDescription</i>
<i style="left:325.0px;top:1272px;color:#e07e2b">varchar(400)</i>
<i style="left:468.0px;top:1272px;color:#dcdde0">NULL</i>
<i style="left:181.0px;top:1291px;color:#dcdde0">Status</i>
<i style="left:325.0px;top:1291px;color:#e07e2b">varchar(7)</i>
<i style="left:468.0px;top:1291px;color:#dcdde0">NULL</i>
<div class="tb" style="left:678px;top:1076px;width:397px;height:300px">
<b class="bar" style="background:#2271f5"></b>
<b class="sep" style="top:26.5px"></b>
</div>
<i style="left:680.0px;top:1060px;color:#868a94;font-weight:400">EDW.</i>
<i style="left:708.0px;top:1060px;color:#dcdde0">DimPromotion</i>
<i style="left:687.0px;top:1084px;color:#dcdde0">PromotionKey</i>
<i style="left:850.0px;top:1084px;color:#d3b51f">number(38,0)</i>
<i style="left:935.0px;top:1084px;color:#d3b51f">IDENTITY</i>
<i style="left:1028.0px;top:1084px;color:#dcdde0">PK</i>
<i style="left:687.0px;top:1114px;color:#dcdde0">PromotionAlternateKey</i>
<i style="left:850.0px;top:1114px;color:#d3b51f">number(38,0)</i>
<i style="left:993.0px;top:1114px;color:#dcdde0">NULL</i>
<i style="left:687.0px;top:1134px;color:#dcdde0">EnglishPromotionName</i>
<i style="left:850.0px;top:1134px;color:#e07e2b">varchar(255)</i>
<i style="left:993.0px;top:1134px;color:#dcdde0">NULL</i>
<i style="left:687.0px;top:1153px;color:#dcdde0">SpanishPromotionName</i>
<i style="left:850.0px;top:1153px;color:#e07e2b">varchar(255)</i>
<i style="left:993.0px;top:1153px;color:#dcdde0">NULL</i>
<i style="left:687.0px;top:1173px;color:#dcdde0">FrenchPromotionName</i>
<i style="left:850.0px;top:1173px;color:#e07e2b">varchar(255)</i>
<i style="left:993.0px;top:1173px;color:#dcdde0">NULL</i>
<i style="left:687.0px;top:1192px;color:#dcdde0">DiscountPct</i>
<i style="left:850.0px;top:1192px;color:#c3c021">float</i>
<i style="left:993.0px;top:1192px;color:#dcdde0">NULL</i>
<i style="left:687.0px;top:1212px;color:#dcdde0">EnglishPromotionType</i>
<i style="left:850.0px;top:1212px;color:#e07e2b">varchar(50)</i>
<i style="left:993.0px;top:1212px;color:#dcdde0">NULL</i>
<i style="left:687.0px;top:1231px;color:#dcdde0">SpanishPromotionType</i>
<i style="left:850.0px;top:1231px;color:#e07e2b">varchar(50)</i>
<i style="left:993.0px;top:1231px;color:#dcdde0">NULL</i>
<i style="left:687.0px;top:1251px;color:#dcdde0">FrenchPromotionType</i>
<i style="left:850.0px;top:1251px;color:#e07e2b">varchar(50)</i>
<i style="left:993.0px;top:1251px;color:#dcdde0">NULL</i>
<i style="left:687.0px;top:1270px;color:#dcdde0">EnglishPromotionCategory</i>
<i style="left:850.0px;top:1270px;color:#e07e2b">varchar(50)</i>
<i style="left:993.0px;top:1270px;color:#dcdde0">NULL</i>
<i style="left:687.0px;top:1290px;color:#dcdde0">SpanishPromotionCategory</i>
<i style="left:850.0px;top:1290px;color:#e07e2b">varchar(50)</i>
<i style="left:993.0px;top:1290px;color:#dcdde0">NULL</i>
<i style="left:687.0px;top:1309px;color:#dcdde0">FrenchPromotionCategory</i>
<i style="left:850.0px;top:1309px;color:#e07e2b">varchar(50)</i>
<i style="left:993.0px;top:1309px;color:#dcdde0">NULL</i>
<div class="tb" style="left:1080px;top:1222px;width:410px;height:140px">
<b class="bar" style="background:#f4b81c"></b>
<b class="sep" style="top:25.5px"></b>
</div>
<i style="left:1083.0px;top:1207px;color:#868a94;font-weight:400">EDW.</i>
<i style="left:1111.0px;top:1207px;color:#dcdde0">DimSalesTerritory</i>
<i style="left:1089.0px;top:1229px;color:#dcdde0">SalesTerritoryKey</i>
<i style="left:1265.0px;top:1229px;color:#d3b51f">number(38,0)</i>
<i style="left:1350.0px;top:1229px;color:#d3b51f">IDENTITY</i>
<i style="left:1444.0px;top:1229px;color:#dcdde0">PK</i>
<i style="left:1089.0px;top:1261px;color:#dcdde0">SalesTerritoryAlternateKey</i>
<i style="left:1265.0px;top:1261px;color:#d3b51f">number(38,0)</i>
<i style="left:1409.0px;top:1261px;color:#dcdde0">NULL</i>
<i style="left:1089.0px;top:1280px;color:#dcdde0">SalesTerritoryRegion</i>
<i style="left:1265.0px;top:1280px;color:#e07e2b">varchar(50)</i>
<i style="left:1089.0px;top:1300px;color:#dcdde0">SalesTerritoryCountry</i>
<i style="left:1265.0px;top:1300px;color:#e07e2b">varchar(50)</i>
<i style="left:1089.0px;top:1319px;color:#dcdde0">SalesTerritoryGroup</i>
<i style="left:1265.0px;top:1319px;color:#e07e2b">varchar(50)</i>
 <i style="left:614px;top:1228.5px;color:#e4e5e8;background:#1b1d22;font-size:10.4px;font-weight:400">owns</i>
 <div id="zoom"><b style="top:0"></b><b style="top:42px"></b>
  <svg class="ic" style="left:0;top:0" width="41" height="83" stroke="#b9bcc3" stroke-width="1.6" fill="none"><path d="M13.500,20.500H28.500M21,13V28M13.500,62.500H28.500"/></svg>
 </div>
 <div id="stat" style="letter-spacing:-.5px">60%</div><div id="stat" style="left:76.5px;letter-spacing:.2px">Snowflake</div>
 <div id="cnt"></div>
 <div style="position:absolute;left:1417px;top:1291px;font-size:20.5px;line-height:26px;color:#f2c21a;-webkit-text-stroke:.4px #f2c21a;white-space:nowrap"><span style="font-size:15px;position:relative;top:-2.5px;margin-right:3px;left:-1px">&#9679;</span>6</div>
 <div style="position:absolute;left:1452px;top:1291px;font-size:20.5px;line-height:26px;color:#f0466e;-webkit-text-stroke:.4px #f0466e;white-space:nowrap"><span style="font-size:15px;position:relative;top:-2.5px;margin-right:4.5px;left:-.5px">&#9679;</span>14</div>
 <svg class="ic" style="left:1494px;top:1219px" width="30" height="96" fill="none" stroke="#b9bcc3" stroke-width="1.6" stroke-linejoin="round">
  <path d="M13,2Q23,2 23,10Q23,18 13,18Q10,18 8,17.500Q6,21 2,22Q5,19 4.500,16Q3,14 3,10Q3,2 13,2Z" fill="#a9acb3" stroke="none"/><path d="M9,8.500H18M9,12H15" stroke="#1b1d22" stroke-width="1.8"/>
  <path d="M6,85L19,78L32,85L19,92ZM10,88V96Q19,101 28,96V88" transform="translate(0,-1.5)"/>
 </svg>
 <div id="mini"><b style="left:27.0px;top:2.0px;width:21px;height:10.5px"></b><b style="left:60.0px;top:8.0px;width:17px;height:11px"></b><b style="left:78.5px;top:8.5px;width:26.5px;height:12px"></b><b style="left:105.5px;top:19.0px;width:30px;height:7px"></b><b style="left:67.0px;top:29.0px;width:21.5px;height:31px"></b><b style="left:112.0px;top:31.0px;width:20px;height:11.5px"></b><b style="left:133.0px;top:31.0px;width:24px;height:11.5px"></b><b style="left:27.0px;top:39.0px;width:16px;height:7px"></b><b style="left:95.5px;top:46.5px;width:26.5px;height:9px"></b><b style="left:125.5px;top:49.0px;width:28.5px;height:6.6px"></b><b style="left:43.6px;top:51.0px;width:20px;height:11.5px"></b><b style="left:18.6px;top:64.0px;width:26.4px;height:6.6px"></b><b style="left:109.0px;top:64.0px;width:26.5px;height:18.5px"></b><b style="left:85.5px;top:69.0px;width:23.5px;height:34px"></b><b style="left:38.6px;top:74.0px;width:28px;height:47px"></b><b style="left:75.0px;top:105.0px;width:28.6px;height:20px"></b><b style="left:103.6px;top:115.6px;width:30.4px;height:9.4px"></b><b style="left:8.6px;top:120.0px;width:142px;height:4.5px"></b><b style="left:28.6px;top:125.0px;width:28px;height:33px"></b><b style="left:58.6px;top:133.0px;width:28px;height:18px"></b><b style="left:88.6px;top:130.0px;width:30px;height:28px"></b><b style="left:25px;top:26px;width:126px;height:98px;background:none;border:3px solid #7b7c7f"></b><svg class="ic" style="left:144px;top:138px" width="23" height="20" stroke="#a7aab1" stroke-width="1.6" fill="none"><path d="M3,3L16,17M10,17H16V11"/></svg></div>
</div>
</body></html>
